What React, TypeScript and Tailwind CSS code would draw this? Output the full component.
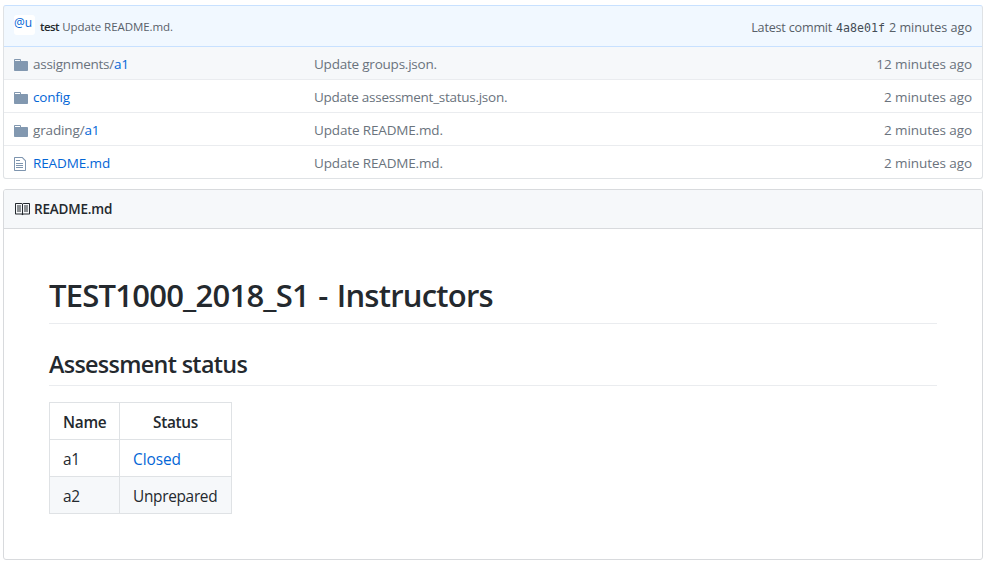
type Row = { prefix?: string; name: string; message: string; age: string; file?: boolean; spacing: string; msgSpacing: string };

const rows: Row[] = [
  { prefix: 'assignments/', name: 'a1', message: 'Update groups.json.', age: '12 minutes ago', spacing: 'tracking-[-0.25px]', msgSpacing: 'tracking-[-0.22px]' },
  { name: 'config', message: 'Update assessment_status.json.', age: '2 minutes ago', spacing: 'tracking-[-0.2px]', msgSpacing: 'tracking-[-0.27px]' },
  { prefix: 'grading/', name: 'a1', message: 'Update README.md.', age: '2 minutes ago', spacing: 'tracking-[-0.14px]', msgSpacing: 'tracking-[-0.15px]' },
  { name: 'README.md', message: 'Update README.md.', age: '2 minutes ago', file: true, spacing: 'tracking-[-0.12px]', msgSpacing: 'tracking-[-0.15px]' },
];

const FolderIcon = () => (
  <svg className="block h-4 w-[14px]" viewBox="0 0 14 16" fill="currentColor">
    <path fillRule="evenodd" d="M13 4H7V3c0-.66-.31-1-1-1H1c-.55 0-1 .45-1 1v10c0 .55.45 1 1 1h12c.55 0 1-.45 1-1V5c0-.55-.45-1-1-1zM6 4H1V3h5v1z" />
  </svg>
);
const FileIcon = () => (
  <svg className="block h-4 w-3" viewBox="0 0 12 16" fill="currentColor">
    <path fillRule="evenodd" d="M6 5H2V4h4v1zM2 8h7V7H2v1zm0 2h7V9H2v1zm0 2h7v-1H2v1zm10-7.5V14c0 .55-.45 1-1 1H1c-.55 0-1-.45-1-1V2c0-.55.45-1 1-1h7.5L12 4.5zM11 5L8 2H1v12h10V5z" />
  </svg>
);
const BookIcon = () => (
  <svg className="block h-4 w-4 shrink-0" viewBox="0 0 16 16" fill="currentColor">
    <path fillRule="evenodd" d="M16 3v9.5c0 .55-.45 1-1 1H9.5l-1 .8-1-.8H2c-.55 0-1-.45-1-1V3c0-.55.45-1 1-1h5.5l1 .8 1-.8H15c.55 0 1 .45 1 1zM8 3H2v9.5h6V3zm7 0H9v9.5h6V3z" />
    <path opacity=".5" d="M3 4h4v7H3zM10 4h4v7h-4z" />
  </svg>
);

export default function App() {
  return (
    <div className="flex h-[565px] w-[989px] flex-col gap-[10px] bg-white pt-[5px] pl-[3px] font-['Open_Sans',sans-serif] text-[#24292e]">
      <section className="w-[980px] overflow-hidden rounded-[3px] border border-[#dfe2e5] border-t-[#c8e1ff]">
        <header className="-mx-px flex h-[41px] items-center justify-between rounded-t-[3px] border-x border-b border-[#c8e1ff] bg-[#f1f8ff] px-[10px] text-[#586069]">
          <div className="flex items-center">
            <span className="mb-0.5 h-5 w-[21px] rounded-[3px] bg-white text-[12px] leading-[15px] tracking-[0.1px] text-[#0366d6]">@u</span>
            <span className="ml-[5px] pt-0.5 text-[11.5px] leading-5">
              <b className="font-semibold tracking-[-0.55px] text-[#24292e]">test</b>
              <span className="ml-[3px] tracking-[-0.06px]">Update README.md.</span>
            </span>
          </div>
          <div className="flex items-baseline pt-[3px] text-[12.6px] leading-5">
            <span className="tracking-[-0.2px]">Latest commit</span>
            <code className="ml-[4px] font-['DejaVu_Sans_Mono',monospace] text-[11.6px] text-[#444d56]">4a8e01f</code>
            <span className="ml-[4px]">2 minutes ago</span>
          </div>
        </header>
        {rows.map((r, i) => (
          <div
            key={i}
            className={`flex items-center border-[#eaecef] pr-[10px] pl-[10px] text-[13.5px] leading-5 text-[#6a737d] ${i === 0 ? 'h-[33px] border-b bg-[#f6f8fa]' : i === 3 ? 'h-8' : 'h-[33px] border-b'}`}
          >
            <span className={`w-[19px] pt-1 ${r.file ? 'text-[#7e95af]' : 'text-[#8298b0]'}`}>{r.file ? <FileIcon /> : <FolderIcon />}</span>
            <span className={`w-[281px] pt-0.5 ${r.spacing}`}>
              {r.prefix}
              <a className="text-[#0366d6]">{r.name}</a>
            </span>
            <span className={`flex-1 pt-0.5 ${r.msgSpacing}`}>{r.message}</span>
            <span className="pt-0.5 tracking-[-0.07px]">{r.age}</span>
          </div>
        ))}
      </section>

      <section className="h-[371px] w-[980px] overflow-hidden rounded-[3px] border border-[#d8dadd]">
        <h3 className="flex h-[39px] items-center gap-[4px] border-b border-[#d8dadd] bg-[#f6f8fa] pl-[10px] text-[13.5px] font-semibold tracking-[-0.2px]">
          <BookIcon />
          README.md
        </h3>
        <article className="px-[45px] pt-[45px]">
          <h1 className="h-[50px] border-b border-[#eaecef] text-[31px] leading-[43px] font-semibold tracking-[-0.77px] [word-spacing:2px]">TEST1000_2018_S1 - Instructors</h1>
          <h2 className="mt-6 h-[38px] border-b border-[#eaecef] text-[23.3px] leading-[32px] font-semibold tracking-[-0.66px]">Assessment status</h2>
          <table className="mt-4 w-[182px] table-fixed border-collapse text-[15.4px] leading-6 tracking-[-0.3px]">
            <colgroup>
              <col className="w-[70px]" />
              <col className="w-[112px]" />
            </colgroup>
            <thead>
              <tr className="h-[37px]">
                <th className="border border-[#dfe2e5] px-[13px] pt-1 pb-0 text-left font-semibold">Name</th>
                <th className="border border-[#dfe2e5] px-[13px] pt-1 pb-0 text-center font-semibold">Status</th>
              </tr>
            </thead>
            <tbody>
              <tr className="h-[37px]">
                <td className="border border-[#dfe2e5] px-[13px] pt-1 pb-0">a1</td>
                <td className="border border-[#dfe2e5] px-[13px] pt-1 pb-0"><a className="tracking-[-0.05px] text-[#0366d6]">Closed</a></td>
              </tr>
              <tr className="h-[37px] bg-[#f6f8fa]">
                <td className="border border-[#dfe2e5] px-[13px] pt-1 pb-0">a2</td>
                <td className="border border-[#dfe2e5] px-[13px] pt-1 pb-0">Unprepared</td>
              </tr>
            </tbody>
          </table>
        </article>
      </section>
    </div>
  );
}
